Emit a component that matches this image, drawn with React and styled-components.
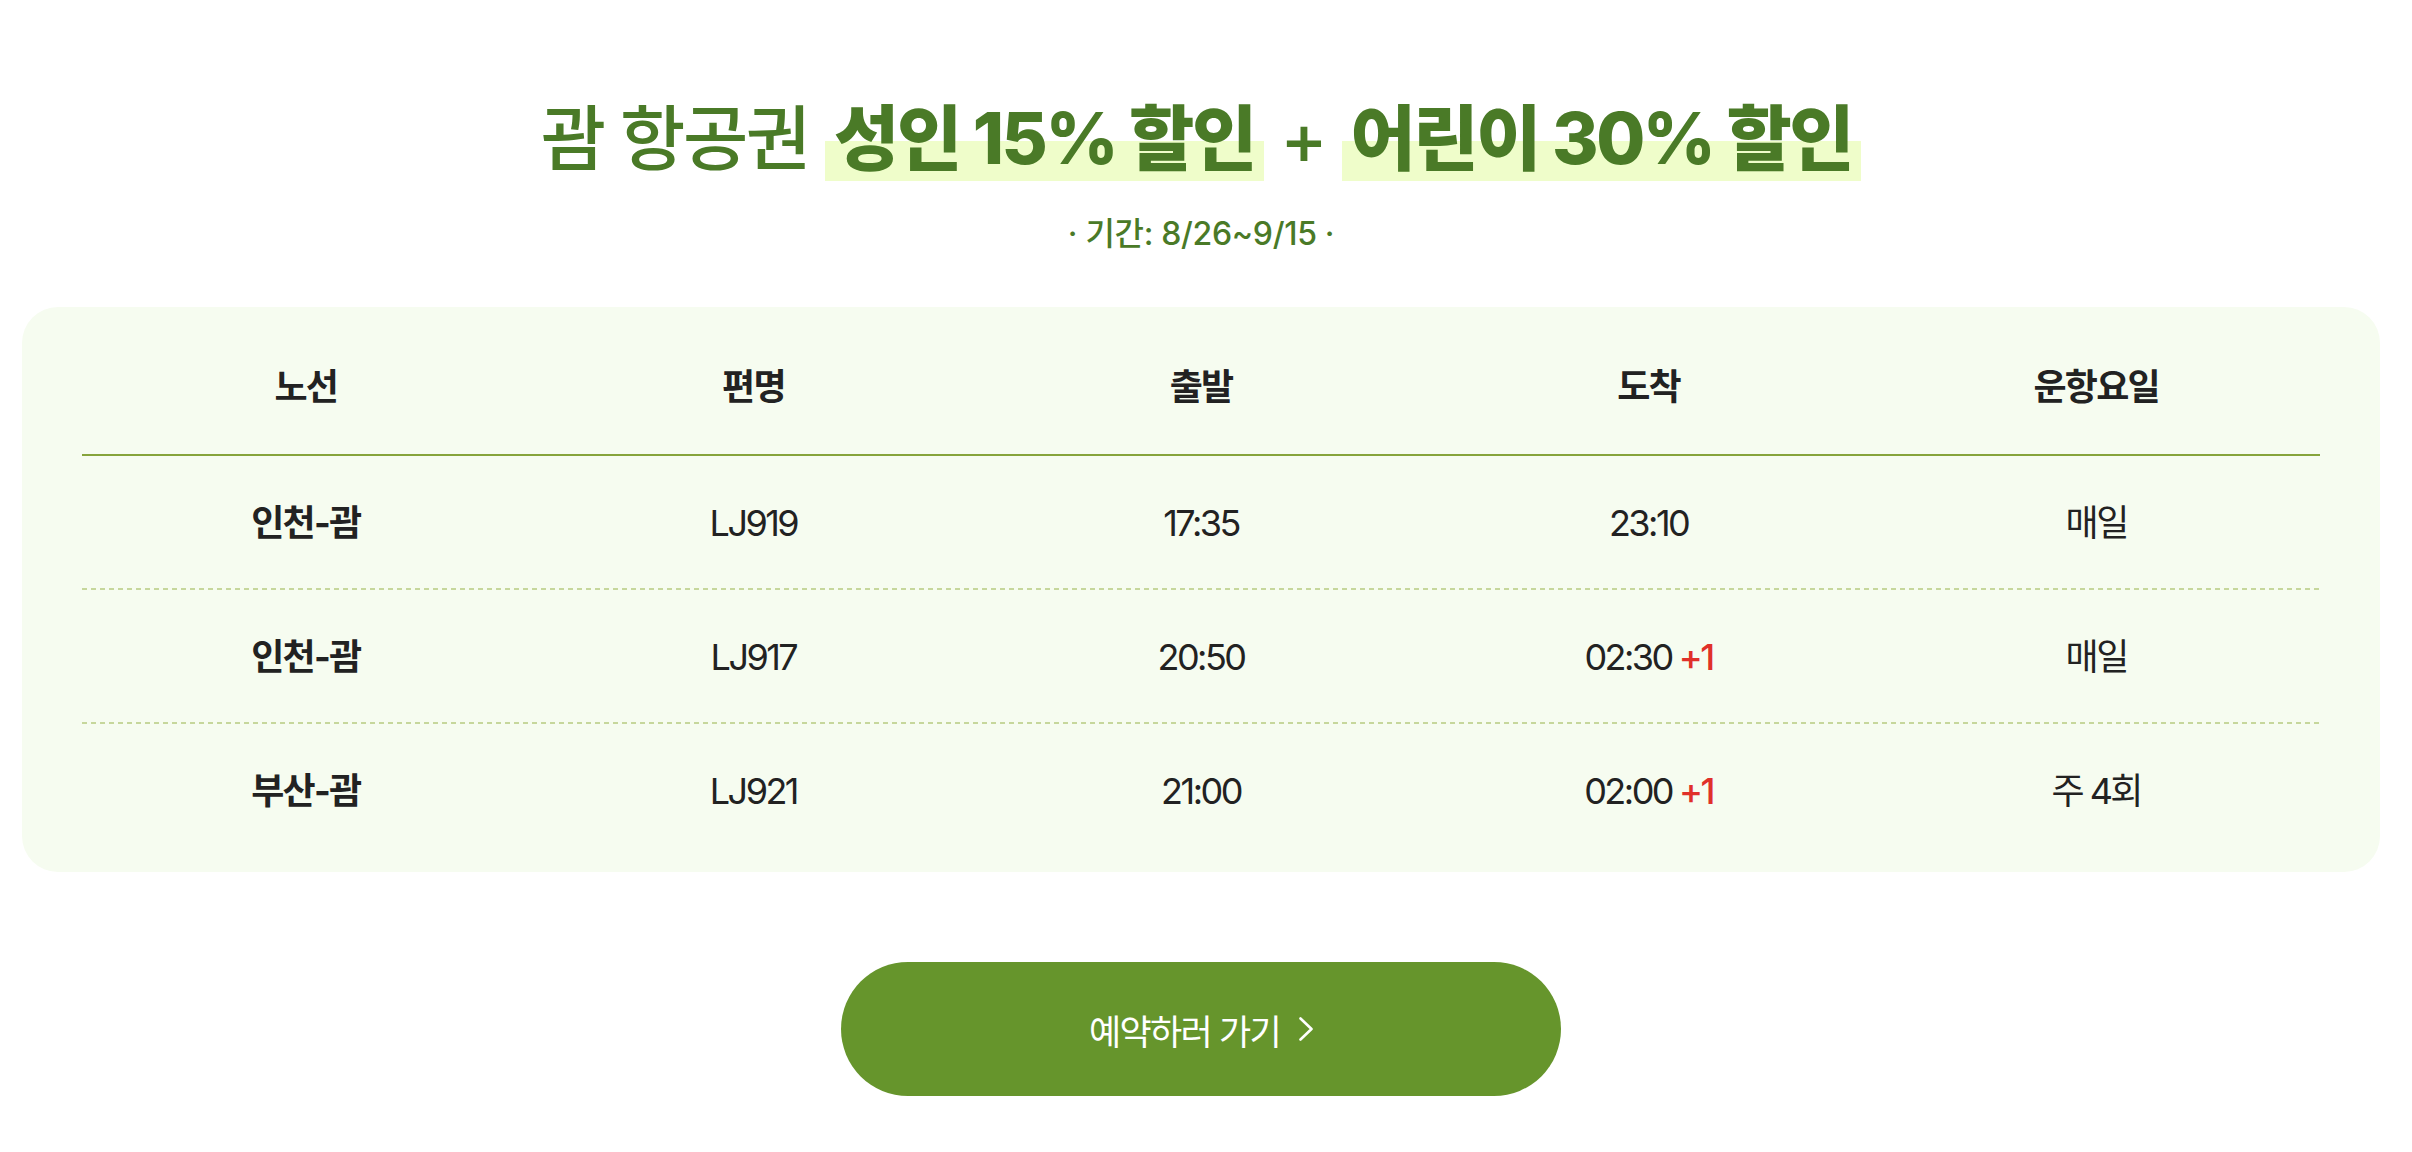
import React from "react";
import styled, { createGlobalStyle } from "styled-components";

const FONT = `Inter, "Noto Sans CJK KR", "Noto Sans", sans-serif`;

const Global = createGlobalStyle`
  html, body { margin: 0; padding: 0; background: #ffffff; }
  body { font-family: ${FONT}; }
  * { box-sizing: border-box; }
`;

const Page = styled.div`
  width: calc(100% - 10px);
  padding: 103px 22px 55px;
  display: flex;
  flex-direction: column;
  align-items: center;
`;

const Title = styled.h1`
  margin: 0;
  font-size: 71px;
  line-height: 1;
  font-weight: 500;
  color: #4a7a27;
  letter-spacing: -0.035em;
  white-space: nowrap;
`;

const Mark = styled.span`
  font-weight: 800;
  padding: 0 9px;
  background: linear-gradient(to bottom, transparent calc(100% - 40px), #effdca calc(100% - 40px));
`;

const Period = styled.p`
  margin: 44px 0 0;
  font-size: 32px;
  line-height: 1;
  font-weight: 500;
  color: #4a7a27;
  letter-spacing: -0.01em;
`;

const Card = styled.section`
  align-self: stretch;
  margin-top: 57px;
  background: #f6fcf0;
  border-radius: 36px;
  padding: 12px 60px 14px;
`;

const Row = styled.div`
  display: grid;
  grid-template-columns: repeat(5, 1fr);
  align-items: center;
  height: ${(p) => (p.$head ? "137px" : "134px")};
  border-bottom: ${(p) => (p.$head ? "2px solid #86a43c" : "none")};
  background: ${(p) =>
    p.$dashed
      ? "repeating-linear-gradient(to right, #c6d79c 0 5px, transparent 5px 9px) bottom / 100% 2px no-repeat"
      : "none"};
`;

const Cell = styled.div`
  text-align: center;
  font-size: 36px;
  line-height: 1;
  color: #222222;
  font-weight: ${(p) => (p.$bold ? 700 : 400)};
  letter-spacing: ${(p) => (p.$bold ? "-0.05em" : "-0.07em")};
  white-space: nowrap;
`;

const Plus = styled.span`
  color: #e0302a;
  font-weight: 500;
`;

const Button = styled.button`
  margin-top: 90px;
  width: 720px;
  height: 134px;
  border: none;
  border-radius: 67px;
  background: #66952c;
  color: #ffffff;
  font-family: ${FONT};
  font-size: 35px;
  font-weight: 400;
  letter-spacing: -0.05em;
  display: flex;
  align-items: center;
  justify-content: center;
  gap: 19px;
  cursor: pointer;
`;

const Chevron = () => (
  <svg width="14" height="24" viewBox="0 0 14 24" fill="none">
    <polyline points="1.5,1.5 12.5,12 1.5,22.5" stroke="#ffffff" strokeWidth="2.6" strokeLinecap="round" strokeLinejoin="round" />
  </svg>
);

const flights = [
  { route: "인천-괌", no: "LJ919", dep: "17:35", arr: "23:10", next: false, days: "매일" },
  { route: "인천-괌", no: "LJ917", dep: "20:50", arr: "02:30", next: true, days: "매일" },
  { route: "부산-괌", no: "LJ921", dep: "21:00", arr: "02:00", next: true, days: "주 4회" },
];

export default function App() {
  return (
    <>
      <Global />
      <Page>
        <Title>
          괌 항공권 <Mark>성인 15% 할인</Mark> + <Mark>어린이 30% 할인</Mark>
        </Title>
        <Period>· 기간: 8/26~9/15 ·</Period>
        <Card>
          <Row $head>
            {["노선", "편명", "출발", "도착", "운항요일"].map((h) => (
              <Cell key={h} $bold>{h}</Cell>
            ))}
          </Row>
          {flights.map((f, i) => (
            <Row key={f.no} $dashed={i < flights.length - 1}>
              <Cell $bold>{f.route}</Cell>
              <Cell>{f.no}</Cell>
              <Cell>{f.dep}</Cell>
              <Cell>
                {f.arr}
                {f.next && <Plus> +1</Plus>}
              </Cell>
              <Cell>{f.days}</Cell>
            </Row>
          ))}
        </Card>
        <Button type="button">
          예약하러 가기
          <Chevron />
        </Button>
      </Page>
    </>
  );
}
